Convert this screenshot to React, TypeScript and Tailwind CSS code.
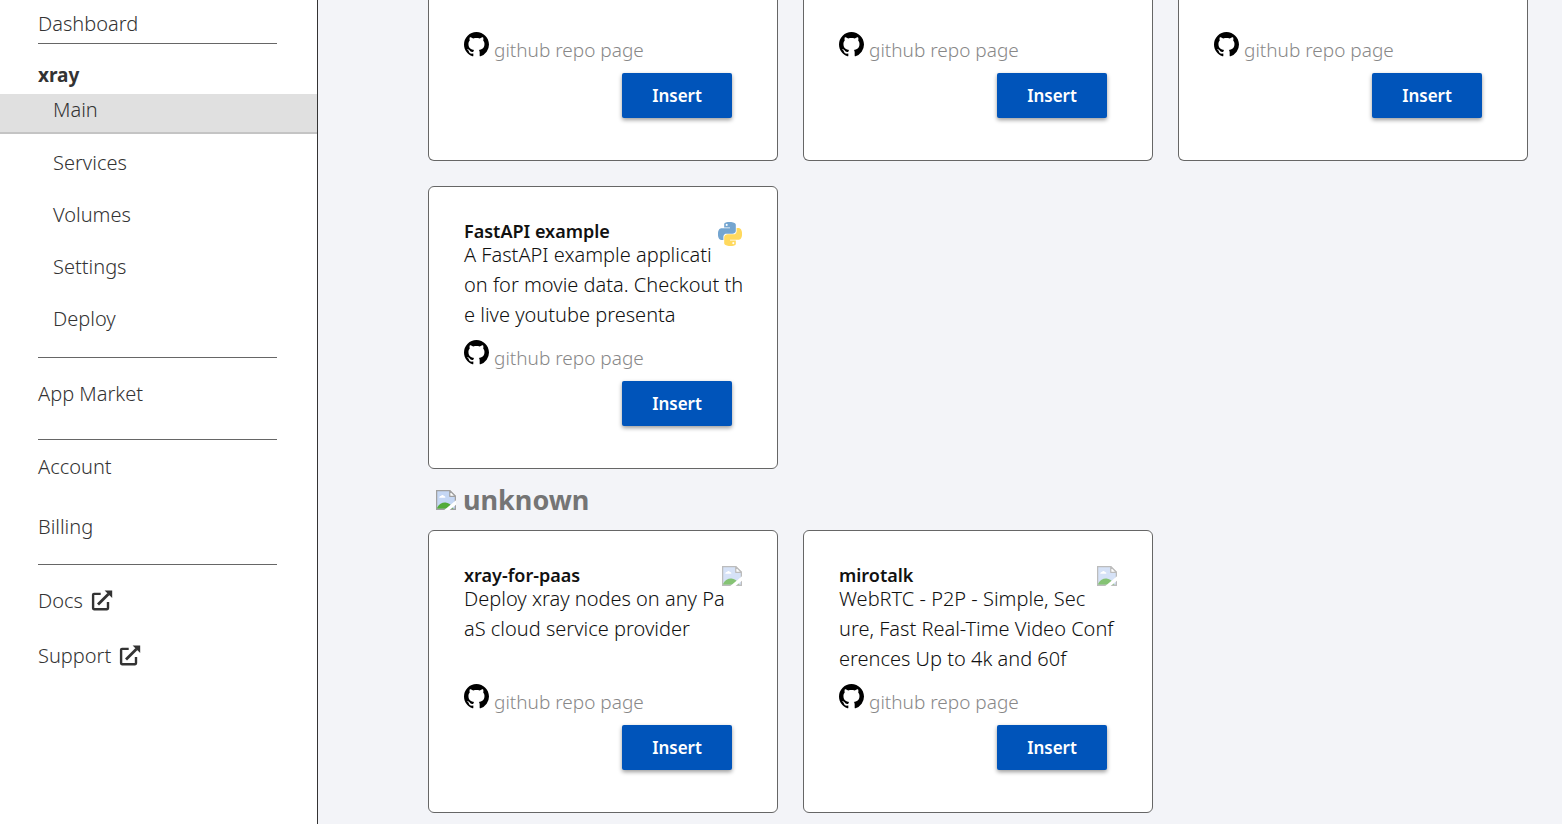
import React from 'react';
import { VscGithubInverted } from 'react-icons/vsc';

interface AppTemplate {
  name: string;
  description: string;
  icon: 'python' | 'missing';
}

const pythonApps: AppTemplate[] = [
  {
    name: 'FastAPI example',
    description: 'A FastAPI example applicati\non for movie data. Checkout th\ne live youtube presenta',
    icon: 'python',
  },
];

const unknownApps: AppTemplate[] = [
  {
    name: 'xray-for-paas',
    description: 'Deploy xray nodes on any Pa\naS cloud service provider',
    icon: 'missing',
  },
  {
    name: 'mirotalk',
    description: 'WebRTC - P2P - Simple, Sec\nure, Fast Real-Time Video Conf\nerences Up to 4k and 60f',
    icon: 'missing',
  },
];

const projectLinks = ['Services', 'Volumes', 'Settings', 'Deploy'];

const PythonIcon = () => (
  <svg viewBox="0 0 24 24" className="w-6 h-6 shrink-0" aria-hidden="true">
    <path
      fill="#74a5d0"
      fillRule="evenodd"
      d="M14.25.18l.9.2.73.26.59.3.45.32.34.34.25.34.16.33.1.3.04.26.02.2-.01.13V8.5l-.05.63-.13.55-.21.46-.26.38-.3.31-.33.25-.35.19-.35.14-.33.1-.3.07-.26.04-.21.02H8.77l-.69.05-.59.14-.5.22-.41.27-.33.32-.27.35-.2.36-.15.37-.1.35-.07.32-.04.27-.02.21v3.06H3.17l-.21-.03-.28-.07-.32-.12-.35-.18-.36-.26-.36-.36-.35-.46-.32-.59-.28-.73-.21-.88-.14-1.05-.05-1.23.06-1.22.16-1.04.24-.87.32-.71.36-.57.4-.44.42-.33.42-.24.4-.16.36-.1.32-.05.24-.01h.16l.06.01h8.16v-.83H6.18l-.01-2.75-.02-.37.05-.34.11-.31.17-.28.25-.26.31-.23.38-.2.44-.18.51-.15.58-.12.64-.1.71-.06.77-.04.84-.02 1.27.05zm-6.3 1.98l-.23.33-.08.41.08.41.23.34.33.22.41.09.41-.09.33-.22.23-.34.08-.41-.08-.41-.23-.33-.33-.22-.41-.09-.41.09z"
    />
    <path
      fill="#ffd95e"
      fillRule="evenodd"
      d="M21.04 6.11l.28.06.32.12.35.18.36.27.36.35.35.47.32.59.28.73.21.88.14 1.04.05 1.23-.06 1.23-.16 1.04-.24.86-.32.71-.36.57-.4.45-.42.33-.42.24-.4.16-.36.09-.32.05-.24.02-.16-.01h-8.22v.82h5.84l.01 2.76.02.36-.05.34-.11.31-.17.29-.25.25-.31.24-.38.2-.44.17-.51.15-.58.13-.64.09-.71.07-.77.04-.84.01-1.27-.04-1.07-.14-.9-.2-.73-.25-.59-.3-.45-.33-.34-.34-.25-.34-.16-.33-.1-.3-.04-.25-.02-.2.01-.13v-5.34l.05-.64.13-.54.21-.46.26-.38.3-.32.33-.24.35-.2.35-.14.33-.1.3-.06.26-.04.21-.02.13-.01h5.84l.69-.05.59-.14.5-.21.41-.28.33-.32.27-.35.2-.36.15-.36.1-.35.07-.32.04-.28.02-.21V6.07h2.09l.14.01zm-6.47 14.25l-.23.33-.08.41.08.41.23.33.33.23.41.08.41-.08.33-.23.23-.33.08-.41-.08-.41-.23-.33-.33-.23-.41-.08-.41.08z"
    />
  </svg>
);

const MissingImageIcon = ({ className = '' }: { className?: string }) => (
  <svg viewBox="0 0 16 16" className={`w-5 h-5 shrink-0 ${className}`} aria-hidden="true">
    <path d="M0.5 0.5H11L15.5 5V15.5H0.5Z" fill="#c5d7f4" stroke="#a0a0a0" />
    <path d="M2.6 6.2C2.6 5.2 3.4 4.8 4 4.9C4.3 3.7 6 3.6 6.3 4.8C7.3 4.7 7.6 5.6 7.4 6.2Z" fill="#fff" />
    <path d="M1 15V14C2.5 11.2 5 9.8 7.6 10C9.8 10.2 11.6 11.4 12.6 13L14 15Z" fill="#52ab3a" />
    <path d="M1 15.5H15" stroke="#a0a0a0" />
    <path d="M11 0.5V5H15.5Z" fill="#fff" stroke="#a0a0a0" strokeLinejoin="round" />
    <path d="M16 8.2V11.8L10.9 16H6.6Z" fill="#fff" />
  </svg>
);

const ExternalIcon = () => (
  <svg viewBox="0 0 22 22" className="w-[22px] h-[22px]" fill="none" stroke="#333" strokeWidth="2.4" aria-hidden="true">
    <path d="M9.7 3.9H3Q2.1 3.9 2.1 4.8V18.3Q2.1 19.2 3 19.2H16.1Q17 19.2 17 18.3V12" />
    <path d="M7 14.5L17.5 4" strokeWidth="2.8" />
    <path d="M13.6 0.4H21.2V8Z" fill="#333" stroke="none" />
  </svg>
);

const Divider = ({ className }: { className: string }) => (
  <hr className={`ml-[38px] mr-10 border-t border-[#666] ${className}`} />
);

const CardFooter = () => (
  <>
    <a href="#" className="flex items-baseline gap-[5px] w-fit text-[19px] leading-7 font-light text-[#888]">
      <VscGithubInverted className="w-[25px] h-[25px] text-black" />
      github repo page
    </a>
    <button className="block ml-auto mr-[10px] mt-[9px] h-[45px] w-[110px] rounded-xs bg-[#0054ba] text-white text-[17px] font-semibold shadow-[0_2px_4px_rgba(0,0,0,0.4)]">
      Insert
    </button>
  </>
);

const AppCard = ({ app }: { app: AppTemplate }) => (
  <article className="w-[350px] bg-white border border-[#666] rounded-md px-[35px] pt-8 pb-[42px]">
    <div className="flex justify-between h-[21px]">
      <h3 className="text-[18px] leading-6 font-semibold text-[#111]">{app.name}</h3>
      <div className="mt-[3px]">
        {app.icon === 'python' ? <PythonIcon /> : <MissingImageIcon className="opacity-70" />}
      </div>
    </div>
    <p className="h-[90px] mb-[10px] text-[20px] leading-[30px] font-light text-[#111] whitespace-pre">{app.description}</p>
    <CardFooter />
  </article>
);

export default function App() {
  return (
    <div className="flex min-h-screen bg-[#f3f4f8] font-['Noto_Sans',sans-serif]">
      <nav className="w-[318px] shrink-0 bg-white border-r border-[#333] text-[20px] leading-7 font-light text-[#333]">
        <a href="#" className="block pl-[38px] mt-[10px]">Dashboard</a>
        <Divider className="mt-[5px]" />
        <h2 className="pl-[38px] mt-[17px] mb-[5px] font-bold text-[19px]">xray</h2>
        <a href="#" className="block h-10 pl-[53px] leading-8 bg-[#e0e0e0] border-b-2 border-[#c4c4c4]">Main</a>
        <div className="flex flex-col gap-3 mt-[13px]">
          {projectLinks.map((label) => (
            <a key={label} href="#" className="block h-10 pl-[53px] leading-8">{label}</a>
          ))}
        </div>
        <Divider className="mt-[14px]" />
        <a href="#" className="block pl-[38px] mt-[22px]">App Market</a>
        <Divider className="mt-[31px]" />
        <a href="#" className="block pl-[38px] mt-[13px]">Account</a>
        <a href="#" className="block pl-[38px] mt-8">Billing</a>
        <Divider className="mt-[23px]" />
        <a href="#" className="flex items-center gap-2 pl-[38px] mt-[22px]">Docs <ExternalIcon /></a>
        <a href="#" className="flex items-center gap-2 pl-[38px] mt-[27px]">Support <ExternalIcon /></a>
      </nav>

      <main className="flex-1 pl-[110px] pb-[10px]">
        <section className="flex flex-wrap gap-[25px]">
          {/* bottom part of the row scrolled past the top edge */}
          {[0, 1, 2].map((i) => (
            <article key={i} className="w-[350px] bg-white border border-t-0 border-[#666] rounded-b-md px-[35px] pt-8 pb-[42px]">
              <CardFooter />
            </article>
          ))}
          {pythonApps.map((app) => <AppCard key={app.name} app={app} />)}
        </section>

        <h2 className="flex items-center gap-[7px] pl-2 mt-[11px] mb-[10px] text-[27px] leading-10 font-bold text-[#757575]">
          <MissingImageIcon />
          unknown
        </h2>
        <section className="flex flex-wrap gap-[25px]">
          {unknownApps.map((app) => <AppCard key={app.name} app={app} />)}
        </section>
      </main>
    </div>
  );
}
